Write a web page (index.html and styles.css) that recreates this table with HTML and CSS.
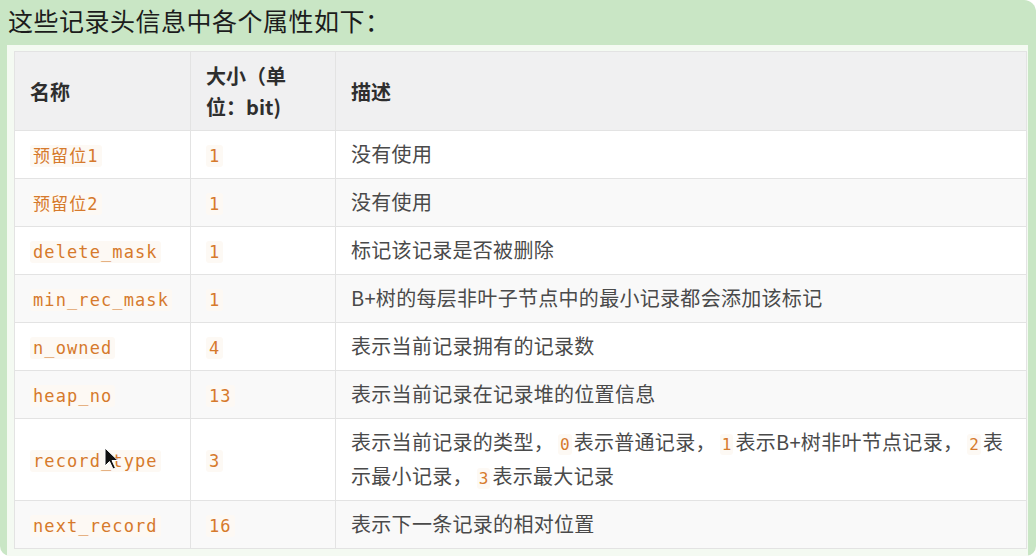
FILE: index.html
```html
<!DOCTYPE html>
<html lang="zh">
<head>
<meta charset="utf-8">
<link rel="stylesheet" href="styles.css">
</head>
<body>
<div class="frame">
  <div class="title">这些记录头信息中各个属性如下：</div>
  <div class="panel">
    <table class="attrs">
      <colgroup>
        <col class="c1"><col class="c2"><col class="c3">
      </colgroup>
      <thead>
        <tr><th>名称</th><th>大小（单位：bit)</th><th>描述</th></tr>
      </thead>
      <tbody>
        <tr><td><code>预留位1</code></td><td><code>1</code></td><td>没有使用</td></tr>
        <tr><td><code>预留位2</code></td><td><code>1</code></td><td>没有使用</td></tr>
        <tr><td><code>delete_mask</code></td><td><code>1</code></td><td>标记该记录是否被删除</td></tr>
        <tr><td><code>min_rec_mask</code></td><td><code>1</code></td><td>B+树的每层非叶子节点中的最小记录都会添加该标记</td></tr>
        <tr><td><code>n_owned</code></td><td><code>4</code></td><td>表示当前记录拥有的记录数</td></tr>
        <tr><td><code>heap_no</code></td><td><code>13</code></td><td>表示当前记录在记录堆的位置信息</td></tr>
        <tr><td class="cursor-cell"><code>record_type</code><svg class="cursor" width="16" height="24" viewBox="0 0 16 24"><path d="M1 1 L1 19 L5.5 14.5 L9 22 L11.5 21 L8 13.5 L14 13.5 Z" fill="#111" stroke="#fff" stroke-width="1"/></svg></td><td><code>3</code></td><td>表示当前记录的类型，<code class="ic">0</code>表示普通记录，<code class="ic">1</code>表示B+树非叶节点记录，<code class="ic">2</code>表示最小记录，<code class="ic">3</code>表示最大记录</td></tr>
        <tr><td><code>next_record</code></td><td><code>16</code></td><td>表示下一条记录的相对位置</td></tr>
      </tbody>
    </table>
  </div>
</div>
</body>
</html>
```

FILE: styles.css
```css
html, body {
  margin: 0;
  padding: 0;
  background: #ffffff;
}
body {
  width: 1036px;
  height: 556px;
  overflow: hidden;
  font-family: "Noto Sans CJK SC", "Noto Sans", sans-serif;
}
.frame {
  box-sizing: border-box;
  width: 1036px;
  height: 556px;
  background: #c9e6c5;
  border-radius: 0 12px 10px 10px;
  padding: 0 8px 0 7px;
  display: flex;
  flex-direction: column;
}
.title {
  flex: 0 0 45px;
  height: 45px;
  line-height: 40px;
  font-size: 25px;
  letter-spacing: 0.5px;
  color: #1c1c1c;
  padding-left: 1px;
}
.panel {
  flex: 1 1 auto;
  min-height: 0;
  background: #f4faf2;
  padding: 6px 1px 0 7px;
}
.attrs {
  width: 1013px;
  border-collapse: collapse;
  table-layout: fixed;
  background: #ffffff;
}
.c1 { width: 176px; }
.c2 { width: 145px; }
.attrs th, .attrs td {
  border: 1px solid #e3e3e3;
  text-align: left;
  vertical-align: middle;
}
.attrs th {
  background: #f0f0f1;
  font-weight: 700;
  font-size: 20px;
  line-height: 31px;
  color: #2e2e2e;
  padding: 8px 15px;
  height: 62px;
}
.attrs td {
  font-size: 20px;
  line-height: 34px;
  letter-spacing: 0.3px;
  color: #4a4a4a;
  padding: 6px 15px 7px 15px;
}
.attrs tbody tr:nth-child(even) td {
  background: #f9f9f9;
}
.attrs code {
  font-family: "DejaVu Sans Mono", "Noto Sans CJK SC", monospace;
  font-size: 17px;
  line-height: 1;
  letter-spacing: 1.1px;
  color: #d67a2c;
  background: #fdf9f4;
  padding: 1px 3px;
  border-radius: 3px;
}
.attrs code.ic {
  font-size: 16px;
  letter-spacing: 0;
  margin: 0 2px 0 4px;
  padding: 1px 2px;
}
.cursor-cell {
  position: relative;
}
.cursor {
  position: absolute;
  left: 89px;
  top: 28px;
}
```
